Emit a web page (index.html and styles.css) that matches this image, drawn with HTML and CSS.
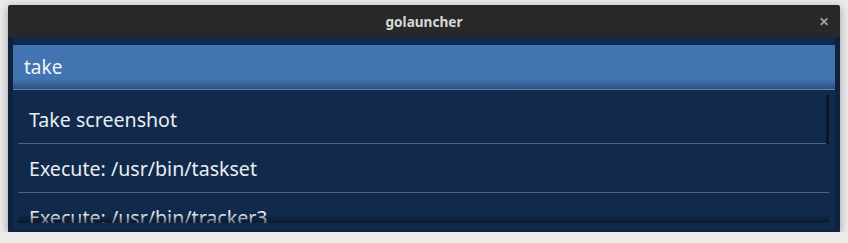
FILE: index.html
```html
<!DOCTYPE html>
<html lang="en">
<head>
    <meta charset="UTF-8">
    <title>golauncher</title>
    <link rel="stylesheet" href="styles.css">
</head>
<body>
    <div class="window">
        <div class="titlebar">
            <span class="title">golauncher</span>
            <span class="close">&#x2715;</span>
        </div>
        <div class="content">
            <div class="search">take</div>
            <div class="results">
                <div class="item">Take screenshot</div>
                <div class="item">Execute: /usr/bin/taskset</div>
                <div class="item">Execute: /usr/bin/tracker3</div>
                <div class="scrollbar"></div>
            </div>
        </div>
    </div>
</body>
</html>
```

FILE: styles.css
```css
body {
    margin: 0;
    padding: 5px 8px 0 8px;
    background-color: #ebebeb;
    font-family: "Noto Sans", "Open Sans", sans-serif;
}

.window {
    width: 832px;
    height: 227px;
    background-color: #0d223f;
    border-radius: 3px 3px 0 0;
    box-shadow: 0 2px 9px rgba(0, 0, 0, 0.35);
    overflow: hidden;
    display: flex;
    flex-direction: column;
}

.titlebar {
    position: relative;
    height: 32px;
    flex-shrink: 0;
    background-color: #282828;
    display: flex;
    align-items: center;
    justify-content: center;
}

.title {
    color: #d8d8d8;
    font-size: 13.6px;
    font-weight: bold;
}

.close {
    position: absolute;
    right: 11px;
    top: 8px;
    color: #a4a4a4;
    font-size: 12px;
    font-weight: bold;
}

.content {
    flex: 1;
    margin: 0 5px 2px 5px;
    padding-top: 8px;
    background-color: #112a4b;
    display: flex;
    flex-direction: column;
}

.search {
    height: 44px;
    padding-left: 11px;
    display: flex;
    align-items: center;
    color: #f2f4f7;
    font-size: 19px;
    background: linear-gradient(to bottom, #4174b0 0, #4174b0 34px, #2c5283 44px);
    border-bottom: 1px solid #5a86bb;
}

.results {
    position: relative;
    margin: 5px 6px 0 5px;
    height: 128px;
    overflow: hidden;
}

.results::after {
    content: "";
    position: absolute;
    left: 0;
    right: 0;
    bottom: 0;
    height: 9px;
    background: linear-gradient(to bottom, rgba(5, 15, 30, 0), rgba(5, 15, 30, 0.6));
}

.item {
    height: 48px;
    padding-left: 11px;
    display: flex;
    align-items: center;
    color: #e9edf2;
    font-size: 19.6px;
    border-bottom: 1px solid #4a6788;
}

.scrollbar {
    position: absolute;
    top: 0;
    right: 0;
    width: 3px;
    height: 49px;
    background-color: #0a1527;
}
```
